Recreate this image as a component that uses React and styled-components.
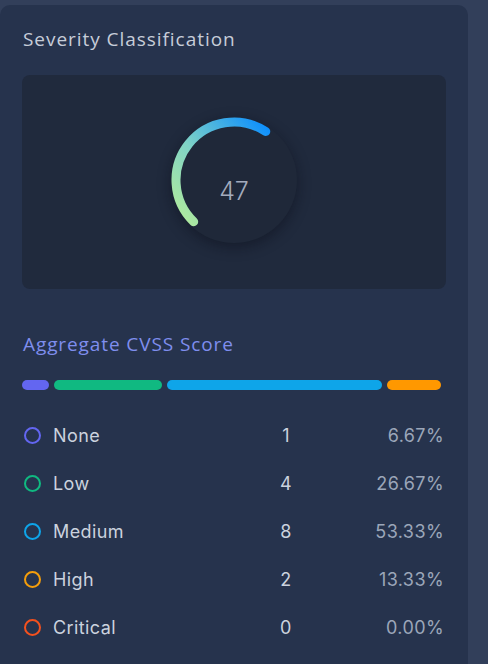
import React from 'react'
import styled, {createGlobalStyle} from 'styled-components'

const GlobalStyle = createGlobalStyle`
	html, body {
		margin: 0;
		padding: 0;
		background: #323f5a;
	}
	body {
		font-family: 'Open Sans', sans-serif;
	}
`

const Page = styled.div`
	height: 664px;
	overflow: hidden;
	padding-top: 5px;
	box-sizing: border-box;
`

const Card = styled.div`
	width: 468px;
	min-height: 700px;
	box-sizing: border-box;
	background: #26334d;
	border-radius: 10px;
	padding: 21px 22px 0;
`

const Title = styled.h3`
	margin: 0;
	padding-left: 1px;
	font-family: 'Open Sans', sans-serif;
	font-weight: 500;
	font-size: 19px;
	line-height: 26px;
	letter-spacing: 0.95px;
	color: #c6cdd9;
`

const GaugeBox = styled.div`
	margin-top: 23px;
	height: 214px;
	border-radius: 8px;
	background: #202a3d;
	display: flex;
	align-items: center;
	justify-content: center;
`

const Disc = styled.div`
	position: relative;
	width: 126px;
	height: 126px;
	border-radius: 50%;
	background: #1f2839;
	box-shadow: 0 4px 14px rgba(8, 12, 22, 0.45);
	display: flex;
	align-items: center;
	justify-content: center;
	margin-top: -4px;
`

const Ring = styled.svg`
	position: absolute;
	left: -7px;
	top: -7px;
`

const Score = styled.span`
	font-family: 'Inter', sans-serif;
	font-weight: 300;
	font-size: 25px;
	color: #a3abbd;
	padding-top: 22px;
`

const Subtitle = styled.h4`
	margin: 42px 0 0;
	padding-left: 1px;
	font-family: 'Open Sans', sans-serif;
	font-weight: 500;
	font-size: 19px;
	line-height: 26px;
	letter-spacing: 0.9px;
	color: #7f8eee;
`

const Bars = styled.div`
	display: flex;
	gap: 5px;
	margin-top: 23px;
	width: 419px;
`

const Bar = styled.div`
	height: 10px;
	border-radius: 5px;
	background: ${p => p.$color};
`

const List = styled.div`
	margin-top: 21px;
`

const Row = styled.div`
	display: grid;
	grid-template-columns: 244px 40px 1fr;
	align-items: center;
	height: 48px;
	font-family: 'Inter', sans-serif;
	font-size: 18px;
	letter-spacing: 0.4px;
`

const Label = styled.div`
	display: flex;
	align-items: center;
	gap: 12px;
	color: #cbd2de;
	padding-left: 2px;
`

const Dot = styled.span`
	width: 13px;
	height: 13px;
	border-radius: 50%;
	border: 2px solid ${p => p.$color};
`

const Count = styled.div`
	text-align: center;
	color: #cbd2de;
`

const Percent = styled.div`
	text-align: right;
	color: #9ba6b9;
	padding-right: 2px;
`

const levels = [
	{name: 'None', count: 1, color: '#6366f1', bar: '#6366f1'},
	{name: 'Low', count: 4, color: '#10b981', bar: '#10b981'},
	{name: 'Medium', count: 8, color: '#0ea5e9', bar: '#0ea5e9'},
	{name: 'High', count: 2, color: '#f59e0b', bar: '#ff9800'},
	{name: 'Critical', count: 0, color: '#f4511e', bar: '#f4511e'},
]

const total = levels.reduce((s, l) => s + l.count, 0)

const Gauge = ({value}) => (
	<Disc>
		<Ring width="140" height="140" viewBox="0 0 140 140">
			<defs>
				<linearGradient id="gaugeGrad" x1="0" y1="1" x2="1" y2="0">
					<stop offset="0%" stopColor="#b4ec9a" />
					<stop offset="45%" stopColor="#7fd3c6" />
					<stop offset="100%" stopColor="#0a8dff" />
				</linearGradient>
			</defs>
			<path
				d="M29.71 111.72 A58 58 0 0 1 101.76 21.47"
				fill="none"
				stroke="url(#gaugeGrad)"
				strokeWidth="9"
				strokeLinecap="round"
			/>
		</Ring>
		<Score>{value}</Score>
	</Disc>
)

const App = () => {
	const barWidth = 419 - 5 * 3
	return (
		<Page>
			<GlobalStyle />
			<Card>
				<Title>Severity Classification</Title>
				<GaugeBox>
					<Gauge value={47} />
				</GaugeBox>
				<Subtitle>Aggregate CVSS Score</Subtitle>
				<Bars>
					{levels.filter(l => l.count > 0).map(l => (
						<Bar key={l.name} $color={l.bar} style={{width: `${(l.count / total) * barWidth}px`}} />
					))}
				</Bars>
				<List>
					{levels.map(l => (
						<Row key={l.name}>
							<Label>
								<Dot $color={l.color} />
								{l.name}
							</Label>
							<Count>{l.count}</Count>
							<Percent>{((l.count / total) * 100).toFixed(2)}%</Percent>
						</Row>
					))}
				</List>
			</Card>
		</Page>
	)
}

export default App
